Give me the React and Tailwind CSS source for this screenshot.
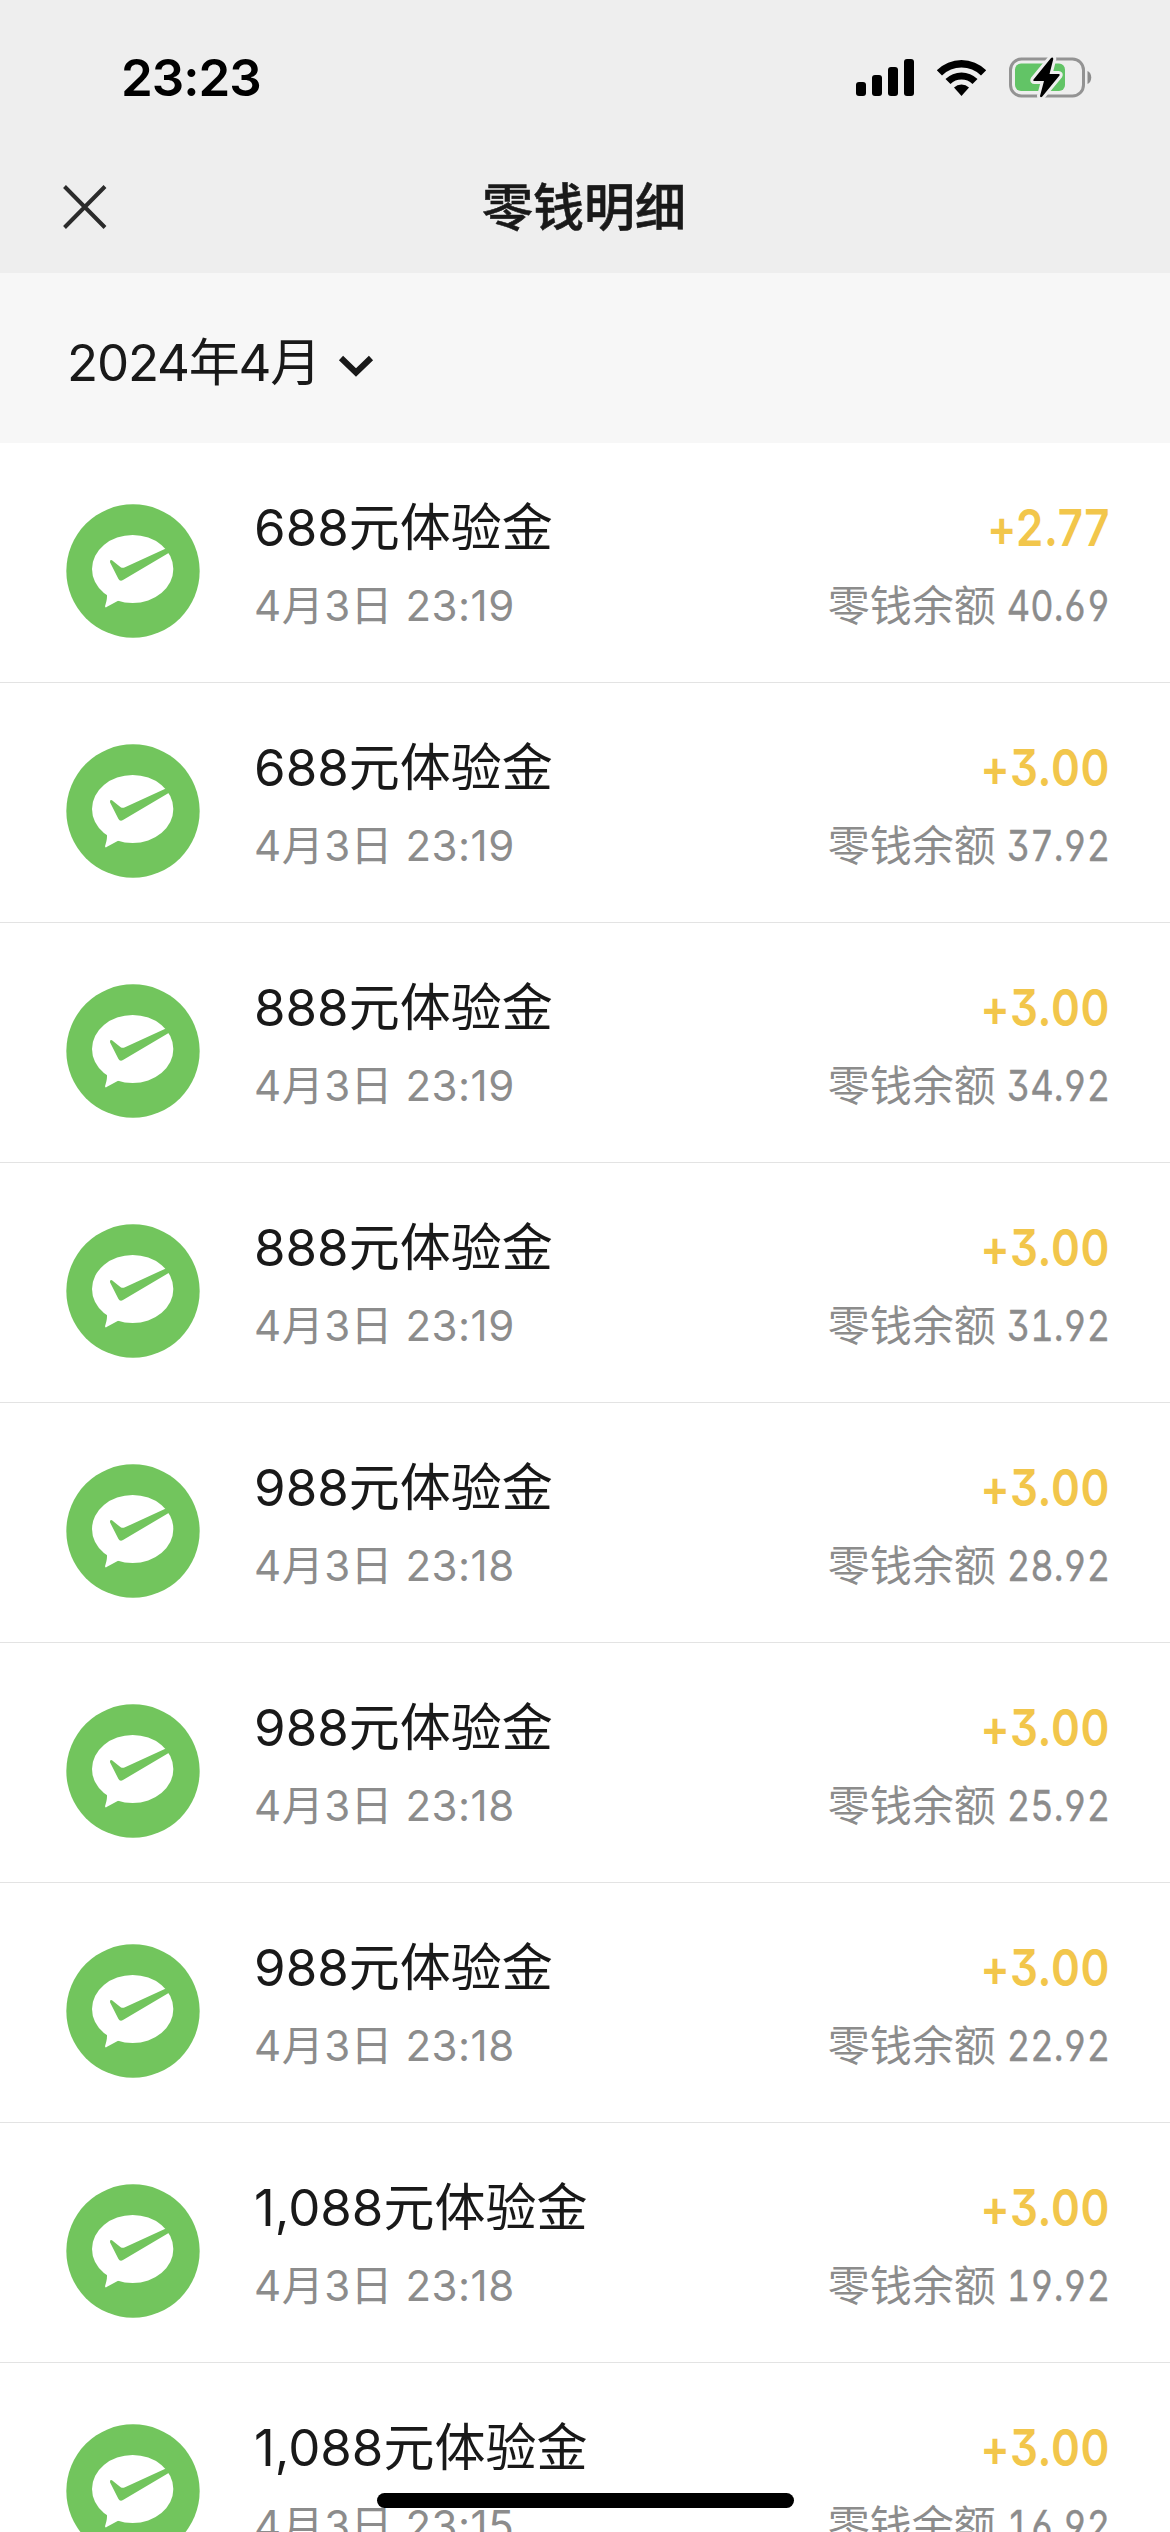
import { useState } from 'react';

const records = [
  { id: 1, title: '688元体验金', time: '4月3日 23:19', amount: '+2.77', balance: '40.69' },
  { id: 2, title: '688元体验金', time: '4月3日 23:19', amount: '+3.00', balance: '37.92' },
  { id: 3, title: '888元体验金', time: '4月3日 23:19', amount: '+3.00', balance: '34.92' },
  { id: 4, title: '888元体验金', time: '4月3日 23:19', amount: '+3.00', balance: '31.92' },
  { id: 5, title: '988元体验金', time: '4月3日 23:18', amount: '+3.00', balance: '28.92' },
  { id: 6, title: '988元体验金', time: '4月3日 23:18', amount: '+3.00', balance: '25.92' },
  { id: 7, title: '988元体验金', time: '4月3日 23:18', amount: '+3.00', balance: '22.92' },
  { id: 8, title: '1,088元体验金', time: '4月3日 23:18', amount: '+3.00', balance: '19.92' },
  { id: 9, title: '1,088元体验金', time: '4月3日 23:15', amount: '+3.00', balance: '16.92' },
];

function StatusBar() {
  return (
    <div className="flex h-[141px] items-start justify-between pt-[57px] pl-[121px] pr-[78px] text-black">
      <span className="text-[51px] leading-[42px] font-semibold tracking-[-1px]">23:23</span>
      <div className="flex items-start">
        <svg className="mt-[2px] mr-[22px] h-[37px] w-[58px]" viewBox="0 0 58 37">
          <rect x="0" y="23" width="10" height="14" rx="3" />
          <rect x="16" y="16" width="10" height="21" rx="3" />
          <rect x="32" y="8" width="10" height="29" rx="3" />
          <rect x="48" y="0" width="10" height="37" rx="3" />
        </svg>
        <svg className="mt-[2px] mr-[22px] h-[37px] w-[51px]" viewBox="0 0 51 37">
          <path d="M0.8 11.2 A35 35 0 0 1 50.2 11.2 L45 16.4 A28 28 0 0 0 6 16.4 Z" />
          <path d="M9.5 20 A23 23 0 0 1 41.5 20 L36.5 25 A16 16 0 0 0 14.5 25 Z" />
          <path d="M18 28.5 A11 11 0 0 1 33 28.5 L25.5 37 Z" />
        </svg>
        <svg className="h-[42px] w-[83px]" viewBox="0 0 83 42">
          <rect x="1.5" y="2" width="73" height="37" rx="11" fill="none" stroke="#939393" strokeWidth="3" />
          <path d="M78.5 14 C83.5 16 83.5 25 78.5 27 Z" fill="#8c8c8c" />
          <rect x="6" y="6.5" width="50" height="27.5" rx="6" fill="#62c466" />
          <path
            d="M42 1 L24.5 22.5 C24 23.5 24.5 24 25.5 24 L35 24 L31 39 C31 40.5 32.5 40.5 33.3 39.5 L50.5 18.5 C51 17.5 50.5 17 49.5 17 L40.5 17 L44.3 2 C44.3 0.5 43 0 42 1 Z"
            fill="#000"
            stroke="#eeeeee"
            strokeWidth="6"
            paintOrder="stroke"
          />
        </svg>
      </div>
    </div>
  );
}

function NavBar() {
  return (
    <div className="grid h-[132px] grid-cols-[1fr_auto_1fr] items-center px-[63px]">
      <button aria-label="关闭" className="w-fit">
        <svg className="h-[44px] w-[44px]" viewBox="0 0 44 44" fill="none" stroke="#2b2b2b" strokeWidth="4">
          <path d="M1.5 1.5 L42 42.5 M42 1.5 L1.5 42.5" />
        </svg>
      </button>
      <h1 className="-ml-[2px] pt-px text-[51px] leading-[60px] font-medium text-[#191919] [-webkit-text-stroke:0.6px_#191919]">零钱明细</h1>
    </div>
  );
}

function PayIcon() {
  return (
    <svg className="mt-[61px] h-[134px] w-[134px] shrink-0" viewBox="49 42 402 402">
      <circle cx="250" cy="243" r="200" fill="#72c55d" />
      <ellipse cx="249" cy="237" rx="122" ry="102" fill="#fff" />
      <path d="M171 305 C174 325 170 335 166 349 Q167 355 172 350 L204 333 L230 320 Z" fill="#fff" />
      <path
        d="M187 211 L213 232 Q219 235 226 232 L347 176 L362 186 L220 270 Q211 276 206 266 L181 217 Q180 208 187 211 Z"
        fill="#72c55d"
      />
    </svg>
  );
}

function RecordRow({ record }) {
  return (
    <li className="flex h-[240px] shrink-0 items-start border-b border-[#e3e3e3] pr-[60px] pl-[66px]">
      <PayIcon />
      <div className="ml-[54px] flex-1 pt-[52px]">
        <p className="text-[51px] leading-[66px] text-[#191919]">{record.title}</p>
        <p className="mt-[18px] text-[42px] leading-[54px] tracking-[0.5px] text-[#8c8c8c]">{record.time}</p>
      </div>
      <div className="flex flex-col items-end pt-[52px]">
        <p className="origin-right scale-x-[0.86] text-[51px] leading-[66px] font-semibold tracking-[0.7px] text-[#f2c64b] [font-feature-settings:'cv03','cv04','cv09']">
          {record.amount}
        </p>
        <p className="mt-[18px] flex text-[42px] leading-[54px] text-[#8c8c8c]">
          <span>零钱余额</span>
          <span className="-ml-[6px] origin-right scale-x-[0.86] [-webkit-text-stroke:0.4px_#8c8c8c] [font-feature-settings:'tnum','cv03','cv04','cv09']">
            {record.balance}
          </span>
        </p>
      </div>
    </li>
  );
}

export default function App() {
  const [month] = useState('2024年4月');

  return (
    <main className="relative flex h-[2532px] w-[1170px] flex-col overflow-hidden bg-white font-['Inter','Noto_Sans_CJK_SC',sans-serif]">
      <header className="shrink-0 bg-[#eeeeee]">
        <StatusBar />
        <NavBar />
      </header>

      <div className="flex h-[170px] shrink-0 items-center bg-[#f7f7f7] pt-[10px] pl-[67px]">
        <span className="text-[51px] leading-[66px] tracking-[-1.2px] text-[#191919]">{month}</span>
        <svg className="mt-[6px] ml-[18px] h-[24px] w-[36px]" viewBox="0 0 36 24" fill="none" stroke="#191919" strokeWidth="6">
          <path d="M3 4 L18 18.5 L33 4" />
        </svg>
      </div>

      <ul className="flex flex-col">
        {records.map(record => (
          <RecordRow key={record.id} record={record} />
        ))}
      </ul>

      {/* home indicator floats over the list */}
      <div className="absolute bottom-[24px] left-[377px] h-[15px] w-[417px] rounded-full bg-black" />
    </main>
  );
}
